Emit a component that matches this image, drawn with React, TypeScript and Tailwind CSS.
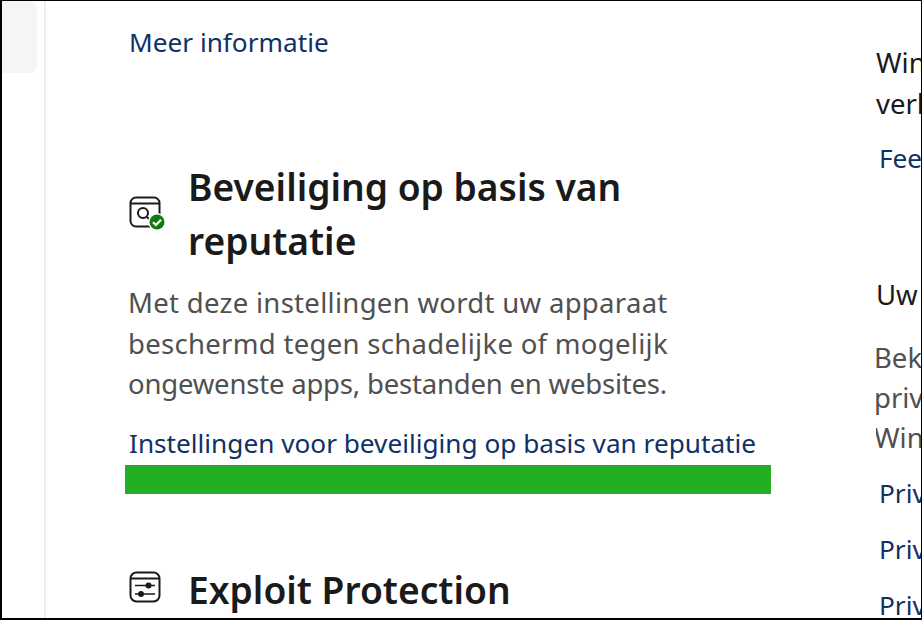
import type { ReactNode } from 'react';

function Link({ children, className = '' }: { children: ReactNode; className?: string }) {
  return <a className={`block whitespace-nowrap text-[26.2px] leading-[40px] text-[#0f3166] ${className}`}>{children}</a>;
}

function ReputationIcon() {
  return (
    <svg width="36" height="36" viewBox="0 0 36 36" fill="none" className="shrink-0">
      <rect x="1.5" y="1.5" width="29" height="29" rx="5.5" stroke="#1a1a1a" strokeWidth="2" />
      <path d="M2 7.5h28" stroke="#1a1a1a" strokeWidth="2" />
      <circle cx="14" cy="17" r="5" stroke="#1a1a1a" strokeWidth="2" />
      <path d="M18 21l4 4" stroke="#1a1a1a" strokeWidth="2" />
      <circle cx="28" cy="26" r="9" fill="#ffffff" />
      <circle cx="28" cy="26" r="7.5" fill="#107c10" />
      <path d="M24 26.2l3 2.8 5-5.2" stroke="#ffffff" strokeWidth="2.2" />
    </svg>
  );
}

function ExploitIcon() {
  return (
    <svg width="32" height="32" viewBox="0 0 32 32" fill="none" className="shrink-0">
      <rect x="1.5" y="1.5" width="29" height="29" rx="6" stroke="#1a1a1a" strokeWidth="2" />
      <path d="M2 7.5h28" stroke="#1a1a1a" strokeWidth="2" />
      <path d="M6 14.5h20M6 23h20" stroke="#1a1a1a" strokeWidth="1.6" />
      <circle cx="19.5" cy="14.5" r="3" fill="#1a1a1a" />
      <circle cx="12" cy="23" r="3" fill="#1a1a1a" />
    </svg>
  );
}

export default function App() {
  return (
    <div className="flex h-[620px] w-[922px] overflow-hidden border border-l-2 border-b-2 border-black bg-white font-['Noto_Sans',sans-serif]">
      {/* Nav rail */}
      <div className="w-[44px] shrink-0 border-r-2 border-[#eeeeee]">
        <div className="h-[72px] w-[35px] rounded-br-lg rounded-tr-lg bg-[#f5f5f5]" />
      </div>

      {/* Main column */}
      <div className="w-[830px] shrink-0 pl-[82px]">
        <Link className="ml-[1px] mt-[21px]">Meer informatie</Link>

        <div className="mt-[98px] flex items-center">
          <div className="w-[60px] shrink-0 pl-[1px]">
            <ReputationIcon />
          </div>
          <h2 className="whitespace-nowrap text-[37.2px] font-semibold leading-[54px] text-[#1a1a1a]">
            Beveiliging op basis van
            <br />
            reputatie
          </h2>
        </div>

        <p className="mt-[15px] whitespace-nowrap text-[27.5px] leading-[40.5px] tracking-[0.3px] text-[#505050]">
          Met deze instellingen wordt uw apparaat
          <br />
          beschermd tegen schadelijke of mogelijk
          <br />
          <span className="tracking-[-0.2px]">ongewenste apps, bestanden en websites.</span>
        </p>

        <Link className="ml-[1px] mt-[18px]">Instellingen voor beveiliging op basis van reputatie</Link>
        <div className="-ml-[3px] mt-[2px] h-[29px] w-[646px] bg-[#22b022]" />

        <div className="mt-[69px] flex items-center">
          <div className="w-[60px] shrink-0 pb-[6px] pl-[1px]">
            <ExploitIcon />
          </div>
          <h2 className="whitespace-nowrap text-[37.2px] font-semibold leading-[54px] text-[#1a1a1a]">Exploit Protection</h2>
        </div>
      </div>

      {/* Right column, cut off by the window edge */}
      <div className="min-w-0 flex-1 overflow-hidden">
        <p className="mt-[41px] whitespace-nowrap text-[27.5px] leading-[41px] text-[#1a1a1a]">
          Windows
          <br />
          verbeteren
        </p>
        <Link className="ml-[3px] mt-[14px]">Feedback</Link>
        <p className="mt-[96px] whitespace-nowrap text-[27.5px] leading-[41px] text-[#1a1a1a]">Uw privacy</p>
        <p className="-ml-[2px] mt-[23px] whitespace-nowrap text-[27.5px] leading-[40px] text-[#505050]">
          Bekijk
          <br />
          privacy
          <br />
          Windows
        </p>
        <Link className="ml-[3px] mt-[15px]">Privacy</Link>
        <Link className="ml-[3px] mt-[16px]">Privacy</Link>
        <Link className="ml-[3px] mt-[16px]">Privacy</Link>
      </div>
    </div>
  );
}
